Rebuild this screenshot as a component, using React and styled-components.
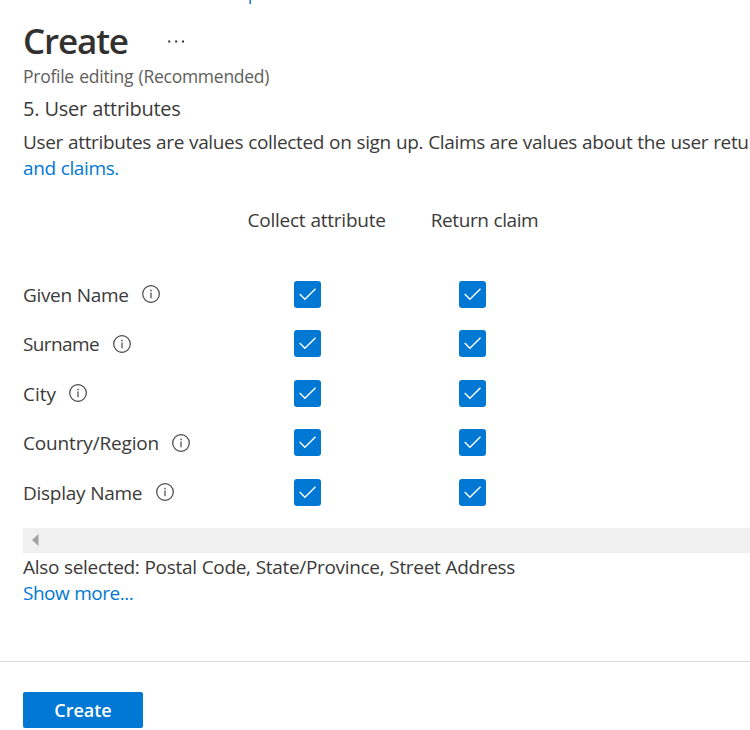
import React from 'react';
import styled, { createGlobalStyle } from 'styled-components';

const GlobalStyle = createGlobalStyle`
  * { box-sizing: border-box; }
  body {
    margin: 0;
    background: #fff;
    color: #3b3a39;
    font-family: "Open Sans", "Noto Sans", sans-serif;
    overflow: hidden;
  }
`;

const Page = styled.main`
  height: 730px;
  overflow: hidden;
  display: flex;
  flex-direction: column;
`;

const Breadcrumb = styled.div`
  height: 4px;
  flex: none;
  padding-left: 249px;
`;

const BreadcrumbTail = styled.div`
  width: 2px;
  height: 4px;
  border-left: 1px solid #9fa9c0;
  background: #0088e0;
`;

const Header = styled.header`
  height: 98px;
  flex: none;
  padding: 13px 0 0 23px;
`;

const TitleRow = styled.div`
  display: flex;
  align-items: center;
  height: 48px;
  gap: 40px;
`;

const Title = styled.h1`
  margin: 0;
  width: 105px;
  color: #323130;
  font-size: 35px;
  line-height: 48px;
  font-weight: 600;
  letter-spacing: -1.15px;
  white-space: nowrap;
`;

const MoreIcon = styled.svg`
  display: block;
  width: 17px;
  height: 3px;
`;

const Subtitle = styled.div`
  margin-top: -1px;
  font-size: 17.5px;
  line-height: 24px;
  letter-spacing: -0.26px;
  word-spacing: 1px;
  color: #605e5c;
  white-space: nowrap;
`;

const Content = styled.section`
  height: 559px;
  flex: none;
  padding-left: 23px;
  overflow: hidden;
`;

const SectionTitle = styled.h2`
  margin: -6px 0 0;
  font-size: 20px;
  line-height: 26px;
  font-weight: 400;
  letter-spacing: -0.28px;
  word-spacing: 0.5px;
  white-space: nowrap;
`;

const Line = styled.div`
  font-size: 19px;
  line-height: 26px;
  letter-spacing: ${(p) => p.$spacing ?? -0.34}px;
  word-spacing: 0.4px;
  white-space: nowrap;
`;

const Description = styled.div`
  padding-top: 7px;
`;

const Link = styled.a`
  color: #0078d4;
  text-decoration: none;
`;

const Columns = styled.div`
  display: grid;
  grid-template-columns: 202px 165px 165px;
  align-items: center;
`;

const TableHead = styled.div`
  display: flex;
  gap: 45px;
  height: 88.65px;
  padding: 26px 0 0 224.5px;
`;

const Row = styled(Columns)`
  height: 49.5px;
`;

const LabelCell = styled.div`
  display: flex;
  align-items: center;
  gap: 12.5px;
`;

const LabelText = styled(Line)`
  width: ${(p) => p.$width}px;
  padding-top: 1px;
`;

const InfoIcon = styled.svg`
  display: block;
  width: 18px;
  height: 18px;
`;

const CheckCell = styled.div`
  padding-left: 69px;
`;

const Checkbox = styled.span`
  display: block;
  width: 27px;
  height: 27px;
  border-radius: 3px;
  background: #0078d4;

  svg { display: block; }
`;

const Scrollbar = styled.div`
  display: flex;
  align-items: center;
  height: 25px;
  margin-top: 10.85px;
  padding: 0 0 0 9px;
  background: #f0f0f0;

  svg { display: block; }
`;

const Summary = styled.div`
  padding-top: 1px;
`;

const Footer = styled.footer`
  height: 69px;
  flex: none;
  border-top: 1px solid #dcdcdc;
  padding: 30px 23px 0;
`;

const CreateButton = styled.button`
  display: block;
  width: 120px;
  height: 36px;
  padding: 0;
  border: 0;
  border-radius: 2px;
  background: #0078d4;
  color: #fff;
  font: 600 18px/36px "Open Sans", "Noto Sans", sans-serif;
`;

const attributes = [
  { name: 'Given Name', width: 106, spacing: -0.34 },
  { name: 'Surname', width: 77, spacing: -0.6 },
  { name: 'City', width: 33, spacing: 0 },
  { name: 'Country/Region', width: 136, spacing: -0.16 },
  { name: 'Display Name', width: 120, spacing: -0.28 },
];

function Info() {
  return (
    <InfoIcon viewBox="0 0 18 18" fill="none" stroke="#484644">
      <circle cx="9" cy="9" r="8.3" strokeWidth="1.2" />
      <path d="M9 7.5v5.7" strokeWidth="1.2" />
      <path d="M9 4.7v1.5" strokeWidth="1.4" />
    </InfoIcon>
  );
}

function Checked() {
  return (
    <CheckCell>
      <Checkbox role="checkbox" aria-checked="true">
        <svg width="27" height="27" viewBox="0 0 27 27" fill="none">
          <path d="M5.7 13.1 10.9 18.2 21.5 7.7" stroke="#fff" strokeWidth="1.4" />
        </svg>
      </Checkbox>
    </CheckCell>
  );
}

export default function App() {
  return (
    <Page>
      <GlobalStyle />
      <Breadcrumb><BreadcrumbTail /></Breadcrumb>
      <Header>
        <TitleRow>
          <Title>Create</Title>
          <MoreIcon viewBox="0 0 17 3" fill="#323130">
            <rect x="0.2" y="0.5" width="2" height="2" />
            <rect x="7.2" y="0.5" width="2" height="2" />
            <rect x="14" y="0.5" width="2" height="2" />
          </MoreIcon>
        </TitleRow>
        <Subtitle>Profile editing (Recommended)</Subtitle>
      </Header>
      <Content>
        <SectionTitle>5. User attributes</SectionTitle>
        <Description>
          <Line>User attributes are values collected on sign up. Claims are values about the user returned</Line>
          <Line $spacing={-0.37}><Link>and claims.</Link></Line>
        </Description>
        <TableHead>
          <Line $spacing={-0.24}>Collect attribute</Line>
          <Line $spacing={-0.4}>Return claim</Line>
        </TableHead>
        {attributes.map((a) => (
          <Row key={a.name}>
            <LabelCell>
              <LabelText $width={a.width} $spacing={a.spacing}>{a.name}</LabelText>
              <Info />
            </LabelCell>
            <Checked />
            <Checked />
          </Row>
        ))}
        <Scrollbar>
          <svg width="7" height="12" viewBox="0 0 7 12"><path d="M0 6 6.5 0v12z" fill="#a3a3a3" /></svg>
        </Scrollbar>
        <Summary>
          <Line $spacing={-0.32}>Also selected: Postal Code, State/Province, Street Address</Line>
          <Line $spacing={-0.48}><Link>Show more...</Link></Line>
        </Summary>
      </Content>
      <Footer><CreateButton>Create</CreateButton></Footer>
    </Page>
  );
}
